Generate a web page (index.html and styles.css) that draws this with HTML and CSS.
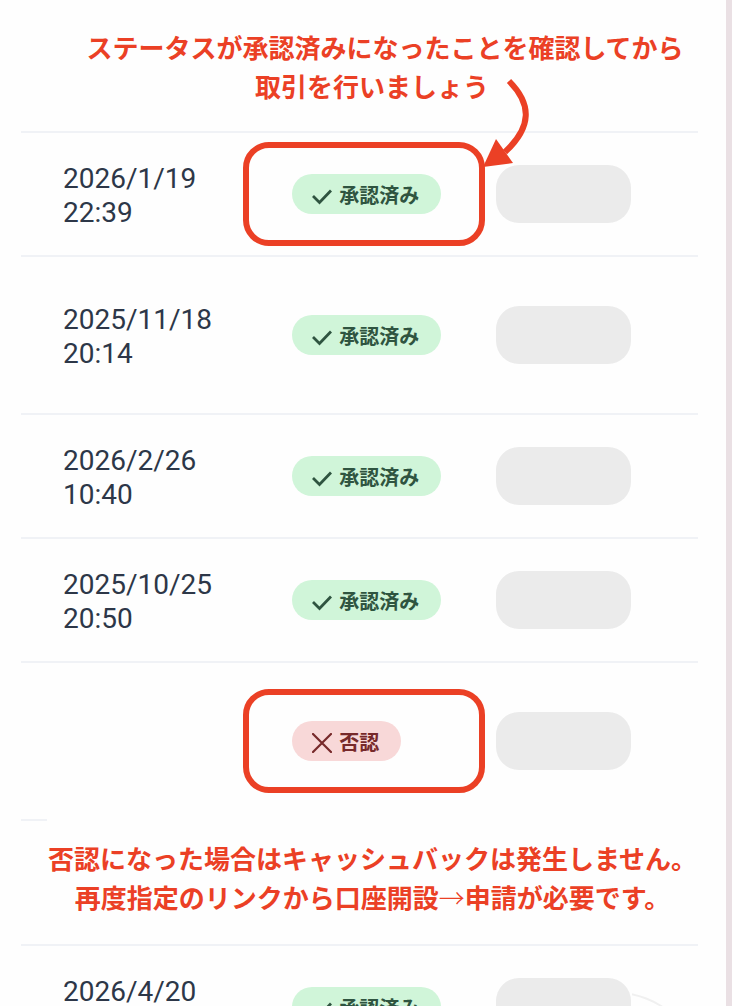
FILE: index.html
```html
<!DOCTYPE html>
<html lang="ja">

<head>
  <meta charset="UTF-8" />
  <meta name="viewport" content="width=device-width, initial-scale=1.0" />
  <title>ステータス</title>
  <link rel="stylesheet" href="styles.css">
</head>

<body>
  <!-- Shared badge icons -->
  <svg class="sprite" aria-hidden="true">
    <symbol id="check" viewBox="0 0 20 20">
      <path d="M1 10 L7.5 16.5 L19 4.5" fill="none" stroke="currentColor" stroke-width="2.8" />
    </symbol>
    <symbol id="cross" viewBox="0 0 20 20">
      <path d="M1 1 L19 19 M19 1 L1 19" fill="none" stroke="currentColor" stroke-width="2.2" stroke-linecap="round" />
    </symbol>
  </svg>

  <main class="page">
    <p class="note note-top">
      ステータスが承認済みになったことを確認してから<br>
      <span class="note-end">取引を行いましょう<svg class="arrow" viewBox="0 0 52 94" aria-hidden="true">
          <path d="M29 4 C52 27 52 50 25 75" fill="none" stroke="#eb4025" stroke-width="6" />
          <path d="M3 90 L16 62 L33 86 Z" fill="#eb4025" />
        </svg></span>
    </p>

    <table class="history">
      <tbody>
        <tr>
          <td class="date">2026/1/19<br>22:39</td>
          <td class="status">
            <div class="status-box marked">
              <span class="badge approved"><svg><use href="#check" /></svg>承認済み</span>
            </div>
          </td>
          <td><div class="blank"></div></td>
        </tr>
        <tr class="tall">
          <td class="date">2025/11/18<br>20:14</td>
          <td class="status">
            <div class="status-box">
              <span class="badge approved"><svg><use href="#check" /></svg>承認済み</span>
            </div>
          </td>
          <td><div class="blank"></div></td>
        </tr>
        <tr>
          <td class="date">2026/2/26<br>10:40</td>
          <td class="status">
            <div class="status-box">
              <span class="badge approved"><svg><use href="#check" /></svg>承認済み</span>
            </div>
          </td>
          <td><div class="blank"></div></td>
        </tr>
        <tr>
          <td class="date">2025/10/25<br>20:50</td>
          <td class="status">
            <div class="status-box">
              <span class="badge approved"><svg><use href="#check" /></svg>承認済み</span>
            </div>
          </td>
          <td><div class="blank"></div></td>
        </tr>
        <tr class="tall">
          <td class="date"></td>
          <td class="status">
            <div class="status-box marked">
              <span class="badge rejected"><svg><use href="#cross" /></svg>否認</span>
            </div>
          </td>
          <td><div class="blank"></div></td>
        </tr>
        <tr>
          <td class="note-cell" colspan="3">
            <p class="note note-row">
              否認になった場合はキャッシュバックは発生しません。<br>
              再度指定のリンクから口座開設<span class="thin">→</span>申請が必要です。
            </p>
          </td>
        </tr>
        <tr>
          <td class="date">2026/4/20<br>&nbsp;</td>
          <td class="status">
            <div class="status-box">
              <span class="badge approved"><svg><use href="#check" /></svg>承認済み</span>
            </div>
          </td>
          <td><div class="blank ringed"></div></td>
        </tr>
      </tbody>
    </table>
  </main>
</body>

</html>
```
FILE: styles.css
```css
/* Base */
* {
  box-sizing: border-box;
}

body {
  margin: 0;
  background-color: #fefefe;
  font-family: Roboto, "Noto Sans CJK JP", sans-serif;
  color: #2d3748;
}

.sprite {
  display: none;
}

.page {
  height: 100vh;
  overflow: hidden;
  padding: 27px 28px 0 21px;
  border-right: 6px solid #eae0e4;
}

/* Red notes */
.note {
  margin: 0;
  color: #eb4025;
  font-family: "Noto Sans CJK JP", sans-serif;
  font-size: 26px;
  font-weight: 700;
  line-height: 39px;
  text-align: center;
  white-space: nowrap;
}

.note-top {
  padding-left: 51px;
  padding-bottom: 26px;
}

.note-end {
  position: relative;
  margin-right: 26px;
}

.arrow {
  position: absolute;
  top: 10px;
  left: calc(100% - 9px);
  width: 52px;
  height: 94px;
  z-index: 2;
}

.note-row {
  position: relative;
  height: 125px;
  margin: -2px 0 0 26px;
  padding-top: 19px;
  background-color: #fefefe;
}

.thin {
  font-weight: 300;
}

/* History table */
.history {
  width: 100%;
  table-layout: fixed;
  border-spacing: 0;
  border-top: 2px solid #f0f2f6;
}

.history td {
  height: 124px;
  padding: 0;
  border-bottom: 2px solid #f0f2f6;
  vertical-align: middle;
}

.history .tall td {
  height: 158px;
}

.history .note-cell {
  vertical-align: top;
}

.history .date {
  width: 34%;
  padding-top: 3px;
  padding-left: 42px;
  font-size: 28px;
  line-height: 34px;
}

.history .status {
  width: 36%;
  padding-left: 41px;
}

.status-box {
  position: relative;
  display: flex;
}

.marked::after {
  content: "";
  position: absolute;
  inset: -32px 10px -32px -49px;
  border: 6px solid #eb4025;
  border-radius: 26px;
}

/* Badges */
.badge {
  display: flex;
  align-items: center;
  gap: 7px;
  height: 40px;
  padding: 0 22px 0 20px;
  border-radius: 20px;
  font-size: 20px;
  font-weight: 700;
  white-space: nowrap;
}

.badge svg {
  width: 20px;
  height: 20px;
  margin-top: 4px;
}

.approved {
  background-color: #d0f5d9;
  color: #2f5440;
}

.rejected {
  background-color: #f8d8d8;
  color: #77292a;
}

.blank {
  position: relative;
  width: 135px;
  height: 58px;
  margin-left: 1px;
  border-radius: 23px;
  background-color: #ebebeb;
}

.ringed::before {
  content: "";
  position: absolute;
  top: 13px;
  left: 22px;
  width: 184px;
  height: 184px;
  border: 2px solid #f0f0f0;
  border-radius: 50%;
  clip-path: inset(0 0 0 114px);
}
```
